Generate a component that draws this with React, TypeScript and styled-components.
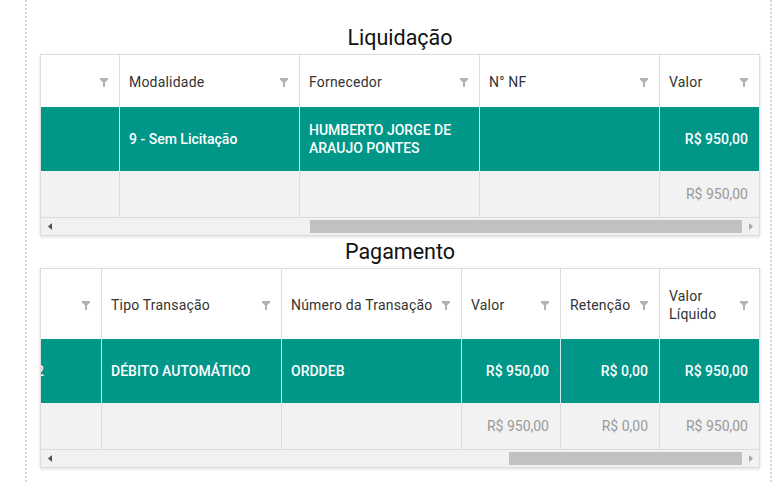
import React from 'react';
import styled, { createGlobalStyle } from 'styled-components';

const Global = createGlobalStyle`
  html, body { margin: 0; padding: 0; background: #fff; }
  body { font-family: Roboto, "Noto Sans", Arial, sans-serif; }
  * { box-sizing: border-box; }
`;

const Page = styled.div`
  margin-left: 25px;
  width: 747px;
  min-height: 100vh;
  border-left: 2px dotted #d8d8d8;
  border-right: 2px dotted #d8d8d8;
  padding: 26px 10px 0 13px;
  display: flex;
  flex-direction: column;
`;

const Section = styled.section`
  display: flex;
  flex-direction: column;
  gap: 4px;
  & + & { margin-top: 4px; }
`;

const Title = styled.h2`
  margin: 0;
  font-size: 21.5px;
  line-height: 24px;
  font-weight: 400;
  color: #111;
  text-align: center;
`;

const Table = styled.div`
  border: 1px solid #dddddd;
  box-shadow: 0 1px 3px rgba(0, 0, 0, 0.14);
  background: #fff;
`;

const Viewport = styled.div`
  overflow: hidden;
`;

const Rows = styled.div<{ $cols: string; $shift: number }>`
  display: grid;
  grid-template-columns: ${(p) => p.$cols};
  margin-left: ${(p) => -p.$shift}px;
  width: max-content;
`;

const Cell = styled.div<{ $right?: boolean; $last?: boolean }>`
  display: flex;
  align-items: center;
  justify-content: ${(p) => (p.$right ? 'flex-end' : 'flex-start')};
  font-size: 14px;
  line-height: 18px;
  white-space: normal;
  overflow: hidden;
  text-align: ${(p) => (p.$right ? 'right' : 'left')};
`;

const HeadCell = styled(Cell)`
  justify-content: space-between;
  gap: 6px;
  padding: 18px 11px 16px 9px;
  color: #333;
  letter-spacing: 0.2px;
  background: #fff;
  border-right: ${(p) => (p.$last ? 'none' : '1px solid #dddddd')};
`;

const DataCell = styled(Cell)`
  padding: 14px 11px 14px 9px;
  min-height: 64px;
  background: #009688;
  color: #fff;
  font-weight: 500;
  border-right: ${(p) => (p.$last ? 'none' : '1px solid rgba(255,255,255,0.8)')};
`;

const FootCell = styled(Cell)`
  padding: 14px 11px 14px 9px;
  min-height: 46px;
  background: #f2f2f2;
  color: #9a9a9a;
  border-right: ${(p) => (p.$last ? 'none' : '1px solid #dcdcdc')};
  border-bottom: 1px solid #dcdcdc;
`;

const Bar = styled.div`
  display: flex;
  height: 17px;
  background: #f1f1f1;
`;

const ArrowButton = styled.div<{ $disabled?: boolean }>`
  width: 17px;
  height: 17px;
  display: flex;
  align-items: center;
  justify-content: center;
  color: ${(p) => (p.$disabled ? '#a8a8a8' : '#505050')};
`;

const Track = styled.div`
  flex: 1;
  position: relative;
`;

const Thumb = styled.div`
  position: absolute;
  top: 2px;
  height: 13px;
  background: #c1c1c1;
`;

const Label = styled.span`
  flex: 1 1 auto;
  min-width: 0;
`;

const FilterIcon = () => (
  <svg width="8" height="9" viewBox="0 0 8 9" style={{ flex: '0 0 auto' }}>
    <path d="M0 0H8V1.6L5 4.4V9H3V4.4L0 1.6Z" fill="#b3b3b3" />
  </svg>
);

const Arrow = ({ dir }: { dir: 'left' | 'right' }) => (
  <svg width="4" height="7" viewBox="0 0 4 7">
    <path d={dir === 'left' ? 'M4 0V7L0 3.5Z' : 'M0 0V7L4 3.5Z'} fill="currentColor" />
  </svg>
);

type Col = { title: string; width: number; right?: boolean };

type GridProps = {
  cols: Col[];
  shift: number;
  data: string[];
  foot: string[];
  scrollWidth: number;
  scrollLeft: number;
};

const TRACK = 684;

const DataGrid = ({ cols, shift, data, foot, scrollWidth, scrollLeft }: GridProps) => {
  const template = cols.map((c) => `${c.width}px`).join(' ');
  const viewW = 718;
  const thumbW = (viewW / scrollWidth) * TRACK;
  const thumbL = (scrollLeft / scrollWidth) * TRACK;
  const last = cols.length - 1;
  return (
    <Table>
      <Viewport>
        <Rows $cols={template} $shift={shift}>
          {cols.map((c, i) => (
            <HeadCell key={'h' + i} $last={i === last}>
              <Label>{c.title}</Label>
              <FilterIcon />
            </HeadCell>
          ))}
          {data.map((d, i) => (
            <DataCell key={'d' + i} $right={cols[i].right} $last={i === last}>
              {d}
            </DataCell>
          ))}
          {foot.map((f, i) => (
            <FootCell key={'f' + i} $right={cols[i].right} $last={i === last}>
              {f}
            </FootCell>
          ))}
        </Rows>
      </Viewport>
      <Bar>
        <ArrowButton>
          <Arrow dir="left" />
        </ArrowButton>
        <Track>
          <Thumb style={{ left: thumbL, width: thumbW }} />
        </Track>
        <ArrowButton $disabled>
          <Arrow dir="right" />
        </ArrowButton>
      </Bar>
    </Table>
  );
};

const liqCols: Col[] = [
  { title: '', width: 179 },
  { title: 'Modalidade', width: 180 },
  { title: 'Fornecedor', width: 180 },
  { title: 'N° NF', width: 180 },
  { title: 'Valor', width: 99, right: true },
];

const pagCols: Col[] = [
  { title: '', width: 75 },
  { title: 'Tipo Transação', width: 180 },
  { title: 'Número da Transação', width: 180 },
  { title: 'Valor', width: 99, right: true },
  { title: 'Retenção', width: 99, right: true },
  { title: 'Valor Líquido', width: 99, right: true },
];

export default function App() {
  return (
    <>
      <Global />
      <Page>
        <Section>
          <Title>Liquidação</Title>
          <DataGrid
            cols={liqCols}
            shift={100}
            data={['', '9 - Sem Licitação', 'HUMBERTO JORGE DE ARAUJO PONTES', '', 'R$ 950,00']}
            foot={['', '', '', '', 'R$ 950,00']}
            scrollWidth={1137}
            scrollLeft={419}
          />
        </Section>
        <Section>
          <Title>Pagamento</Title>
          <DataGrid
            cols={pagCols}
            shift={14}
            data={['2', 'DÉBITO AUTOMÁTICO', 'ORDDEB', 'R$ 950,00', 'R$ 0,00', 'R$ 950,00']}
            foot={['', '', '', 'R$ 950,00', 'R$ 0,00', 'R$ 950,00']}
            scrollWidth={2108}
            scrollLeft={1390}
          />
        </Section>
      </Page>
    </>
  );
}
